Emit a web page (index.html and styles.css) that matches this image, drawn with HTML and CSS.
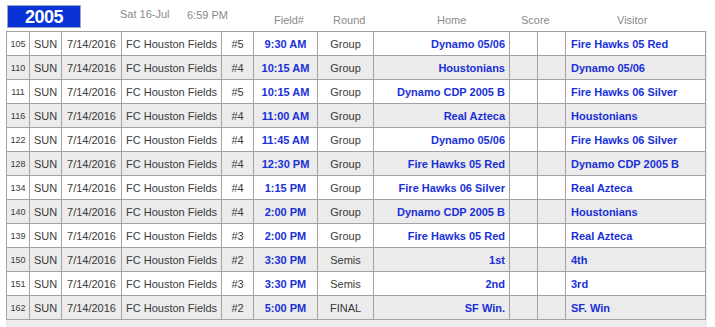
FILE: index.html
```html
<!DOCTYPE html>
<html>
<head>
<meta charset="utf-8">
<link rel="stylesheet" href="styles.css">
</head>
<body>
<div class="page">
  <div class="head">
    <div class="year">2005</div>
    <span class="date">Sat 16-Jul</span>
    <span class="clock">6:59 PM</span>
    <span class="lbl l-field">Field#</span>
    <span class="lbl l-round">Round</span>
    <span class="lbl l-home">Home</span>
    <span class="lbl l-score">Score</span>
    <span class="lbl l-visitor">Visitor</span>
  </div>
  <div class="wrap">
  <table class="games">
    <colgroup>
      <col class="c-id"><col class="c-day"><col class="c-date"><col class="c-loc"><col class="c-fld"><col class="c-time"><col class="c-rnd"><col class="c-home"><col class="c-s"><col class="c-s"><col class="c-vis">
    </colgroup>
    <tbody>
      <tr><td class="id">105</td><td>SUN</td><td>7/14/2016</td><td>FC Houston Fields</td><td>#5</td><td class="time">9:30 AM</td><td>Group</td><td class="home">Dynamo 05/06</td><td></td><td></td><td class="vis">Fire Hawks 05 Red</td></tr>
      <tr><td class="id">110</td><td>SUN</td><td>7/14/2016</td><td>FC Houston Fields</td><td>#4</td><td class="time">10:15 AM</td><td>Group</td><td class="home">Houstonians</td><td></td><td></td><td class="vis">Dynamo 05/06</td></tr>
      <tr><td class="id">111</td><td>SUN</td><td>7/14/2016</td><td>FC Houston Fields</td><td>#5</td><td class="time">10:15 AM</td><td>Group</td><td class="home">Dynamo CDP 2005 B</td><td></td><td></td><td class="vis">Fire Hawks 06 Silver</td></tr>
      <tr><td class="id">116</td><td>SUN</td><td>7/14/2016</td><td>FC Houston Fields</td><td>#4</td><td class="time">11:00 AM</td><td>Group</td><td class="home">Real Azteca</td><td></td><td></td><td class="vis">Houstonians</td></tr>
      <tr><td class="id">122</td><td>SUN</td><td>7/14/2016</td><td>FC Houston Fields</td><td>#4</td><td class="time">11:45 AM</td><td>Group</td><td class="home">Dynamo 05/06</td><td></td><td></td><td class="vis">Fire Hawks 06 Silver</td></tr>
      <tr><td class="id">128</td><td>SUN</td><td>7/14/2016</td><td>FC Houston Fields</td><td>#4</td><td class="time">12:30 PM</td><td>Group</td><td class="home">Fire Hawks 05 Red</td><td></td><td></td><td class="vis">Dynamo CDP 2005 B</td></tr>
      <tr><td class="id">134</td><td>SUN</td><td>7/14/2016</td><td>FC Houston Fields</td><td>#4</td><td class="time">1:15 PM</td><td>Group</td><td class="home">Fire Hawks 06 Silver</td><td></td><td></td><td class="vis">Real Azteca</td></tr>
      <tr><td class="id">140</td><td>SUN</td><td>7/14/2016</td><td>FC Houston Fields</td><td>#4</td><td class="time">2:00 PM</td><td>Group</td><td class="home">Dynamo CDP 2005 B</td><td></td><td></td><td class="vis">Houstonians</td></tr>
      <tr><td class="id">139</td><td>SUN</td><td>7/14/2016</td><td>FC Houston Fields</td><td>#3</td><td class="time">2:00 PM</td><td>Group</td><td class="home">Fire Hawks 05 Red</td><td></td><td></td><td class="vis">Real Azteca</td></tr>
      <tr><td class="id">150</td><td>SUN</td><td>7/14/2016</td><td>FC Houston Fields</td><td>#2</td><td class="time">3:30 PM</td><td>Semis</td><td class="home">1st</td><td></td><td></td><td class="vis">4th</td></tr>
      <tr><td class="id">151</td><td>SUN</td><td>7/14/2016</td><td>FC Houston Fields</td><td>#3</td><td class="time">3:30 PM</td><td>Semis</td><td class="home">2nd</td><td></td><td></td><td class="vis">3rd</td></tr>
      <tr><td class="id">162</td><td>SUN</td><td>7/14/2016</td><td>FC Houston Fields</td><td>#2</td><td class="time">5:00 PM</td><td>FINAL</td><td class="home">SF Win.</td><td></td><td></td><td class="vis">SF. Win</td></tr>
    </tbody>
  </table>
  </div>
</div>
</body>
</html>
```

FILE: styles.css
```css
html, body {
  margin: 0;
  padding: 0;
  background: #ffffff;
}
body {
  font-family: "Liberation Sans", Arial, sans-serif;
  color: #333333;
}
.page {
  padding: 5px 0 0 6px;
}
.head {
  position: relative;
  height: 26px;
}
.year {
  position: absolute;
  left: 1px;
  top: 0;
  width: 72px;
  height: 21px;
  background: #0a33d6;
  border: 1px solid #9aa4c8;
  color: #ffffff;
  font-weight: bold;
  font-size: 18px;
  line-height: 22px;
  letter-spacing: -0.5px;
  text-align: center;
}
.date, .clock, .lbl {
  position: absolute;
  font-size: 11px;
  color: #8a8a8a;
  line-height: 13px;
}
.date { left: 114px; top: 3px; }
.clock { left: 181px; top: 4px; }
.lbl { top: 9px; }
.l-field { left: 268px; }
.l-round { left: 327px; }
.l-home { left: 431px; }
.l-score { left: 515px; }
.l-visitor { left: 611px; }
.wrap {
  width: 701px;
  background: #ececec;
  padding-bottom: 8px;
}
.games {
  border-collapse: collapse;
  table-layout: fixed;
  width: 700px;
  font-size: 11px;
}
.c-id { width: 23px; }
.c-day { width: 32px; }
.c-date { width: 60px; }
.c-loc { width: 100px; }
.c-fld { width: 32px; }
.c-time { width: 64px; }
.c-rnd { width: 56px; }
.c-home { width: 136px; }
.c-s { width: 28px; }
.c-vis { width: 140px; }
.games td {
  border: 1px solid #a3a3a3;
  height: 23px;
  padding: 0 4px;
  text-align: center;
  white-space: nowrap;
  overflow: hidden;
  color: #3a3a3a;
}
.games tr:nth-child(odd) td { background: #ffffff; }
.games tr:nth-child(even) td { background: #ebebeb; }
.games td.id {
  font-size: 9px;
  padding: 0;
}
.games td.time {
  color: #1a30d8;
  font-weight: bold;
}
.games td.home {
  color: #1a30d8;
  font-weight: bold;
  text-align: right;
}
.games td.vis {
  color: #1a30d8;
  font-weight: bold;
  text-align: left;
  padding-left: 5px;
}
```
